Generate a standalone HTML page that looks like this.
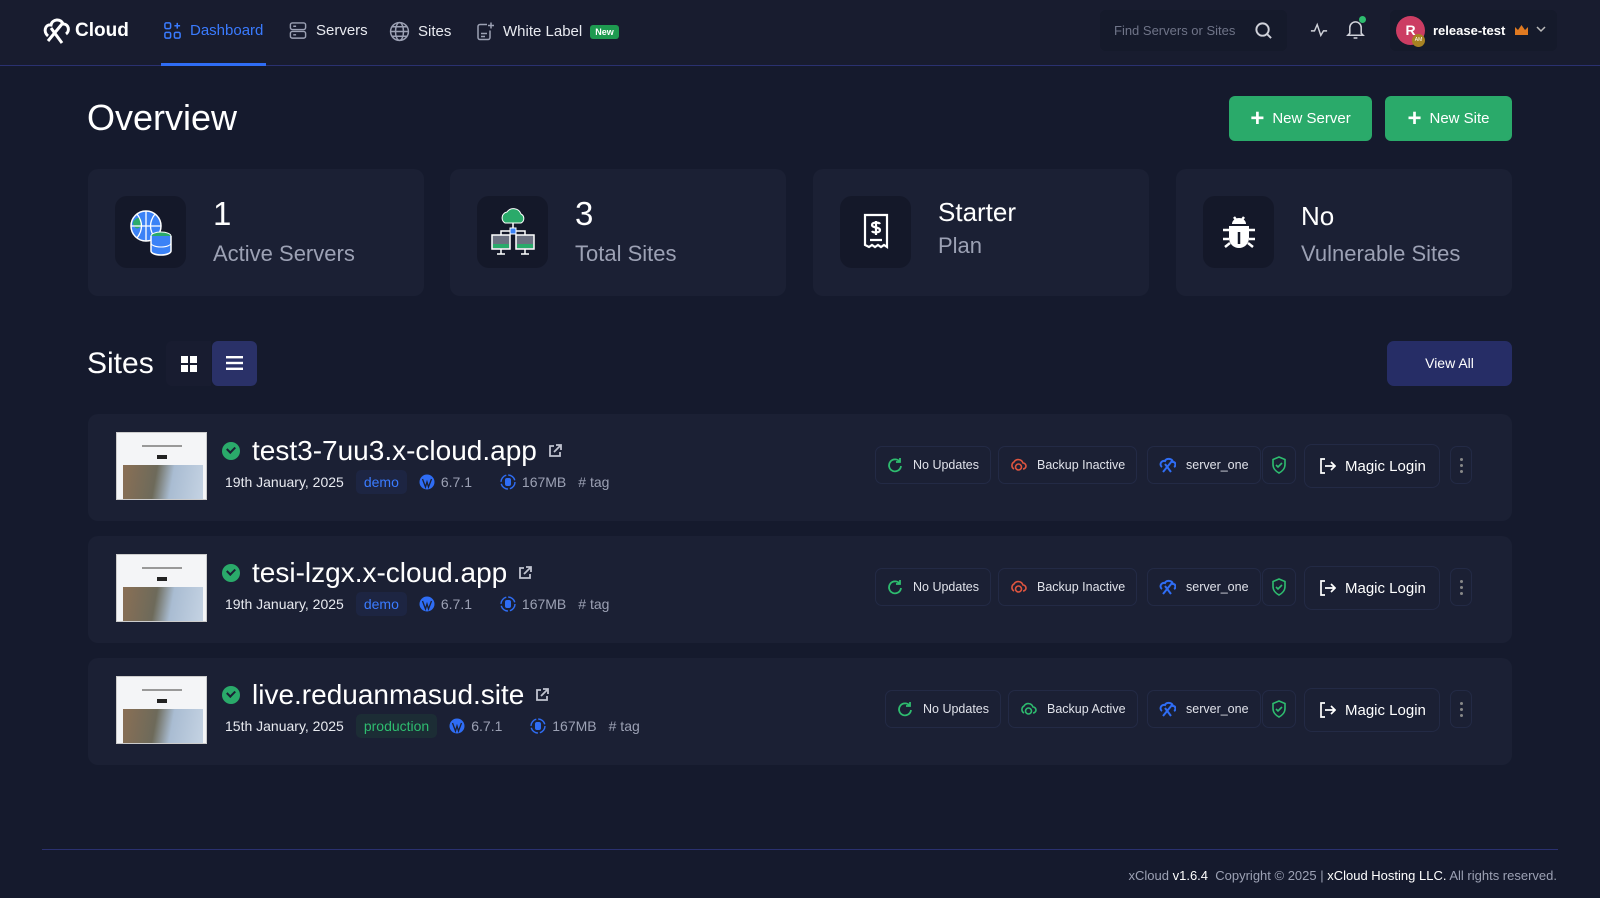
<!DOCTYPE html>
<html><head><meta charset="utf-8"><style>
*{box-sizing:border-box;margin:0;padding:0}
body{width:1600px;height:898px;background:#151a2d;font-family:"Liberation Sans",sans-serif;color:#e8eaf0;position:relative;overflow:hidden}
.abs{position:absolute}
header{position:absolute;left:0;top:0;width:1600px;height:66px;background:#181c2f;border-bottom:1px solid #2a3170}
.nav{position:absolute;top:21px;font-size:15px;display:flex;align-items:center;gap:8px;color:#e8eaf0}
.card{position:absolute;top:169px;width:336px;height:127px;background:#1b2034;border-radius:10px}
.card .ib{position:absolute;left:27px;top:27px;width:71px;height:72px;background:#141829;border-radius:12px;display:flex;align-items:center;justify-content:center}
.card .t1{position:absolute;left:125px;top:26px;font-size:33px;color:#fff}
.card .t2{position:absolute;left:125px;top:72px;font-size:22px;color:#9ca1b4}
.btn{position:absolute;top:96px;height:45px;background:#2aaa6a;border-radius:6px;color:#fff;font-size:15px;display:flex;align-items:center;justify-content:center;gap:8px}
.row{position:absolute;left:88px;width:1424px;height:107px;background:#1b2034;border-radius:10px}
.thumb{position:absolute;left:28px;top:18px;width:91px;height:68px;background:#f4f5f7;border:1px solid #ccc;overflow:hidden}
.thumb .img{position:absolute;left:6px;top:32px;width:80px;height:36px;background:linear-gradient(100deg,#8a6f55 0,#6d6a5a 40%,#a9bcd2 60%,#c5d3e3 100%)}
.thumb .l{position:absolute;left:25px;top:12px;width:40px;height:2px;background:#999}
.thumb .b{position:absolute;left:40px;top:22px;width:10px;height:4px;background:#222}
.title{position:absolute;left:134px;top:21px;font-size:28px;color:#fff;display:flex;align-items:center;gap:10px;white-space:nowrap}
.chk{width:18px;height:18px;border-radius:50%;background:#2aaa6a;display:inline-block;position:relative;margin-right:2px}
.chk:after{content:"";position:absolute;left:5px;top:4px;width:6px;height:4px;border-left:2px solid #1b2034;border-bottom:2px solid #1b2034;transform:rotate(-45deg)}
.sub{position:absolute;left:137px;top:56px;font-size:14px;color:#e8eaf0;display:flex;align-items:center;gap:12px;white-space:nowrap}
.tag{padding:4px 8px;border-radius:5px;background:#1d2542;color:#3a7bff}
.tag.p{background:#1c2d35;color:#2ebc6f}
.gr{color:#9ca1b4;display:flex;align-items:center;gap:6px}
.chip{position:absolute;top:32px;height:38px;border:1px solid #232a45;border-radius:7px;display:flex;align-items:center;gap:10px;padding:0 11px;font-size:12.5px;color:#e0e2ea;white-space:nowrap}
.ml{position:absolute;top:32px;height:44px;border:1px solid #232a45;border-radius:8px;display:flex;align-items:center;gap:9px;padding:0 13px;font-size:15px;color:#fff}
</style></head><body>
<header>
<div class="abs" style="left:42px;top:16px;display:flex;align-items:center;gap:3px">
<svg width="30" height="30" viewBox="0 0 30 30" fill="none" stroke="#fff" stroke-width="3"><path d="M6 20 C1 16 3 8 9 9 C10 3 19 2 21 8 C27 8 28 15 24 18"/><path d="M6 25 L20 8 M9 12 L20 27"/></svg>
<span style="font-weight:bold;font-size:19px;color:#fff">Cloud</span></div>
<div class="nav" style="left:163px;color:#3a7bff"><svg width="19" height="19" viewBox="0 0 20 20" fill="none" stroke="#3a7bff" stroke-width="1.6"><rect x="2" y="2" width="6" height="6" rx="1.5"/><rect x="2" y="12" width="6" height="6" rx="1.5"/><rect x="12" y="12" width="6" height="6" rx="1.5"/><path d="M15 2v6M12 5h6"/></svg>Dashboard</div>
<div class="abs" style="left:161px;top:63px;width:105px;height:3px;background:#2f6df5"></div>
<div class="nav" style="left:288px"><svg width="20" height="19" viewBox="0 0 20 20" fill="none" stroke="#9ca1b4" stroke-width="1.5"><rect x="2" y="2" width="16" height="7" rx="2"/><rect x="2" y="11" width="16" height="7" rx="2"/><path d="M5 5.5h3M5 14.5h3"/></svg>Servers</div>
<div class="nav" style="left:389px"><svg width="21" height="21" viewBox="0 0 20 20" fill="none" stroke="#9ca1b4" stroke-width="1.4"><circle cx="10" cy="10" r="8.5"/><ellipse cx="10" cy="10" rx="3.8" ry="8.5"/><path d="M1.5 10h17M3 5.5h14M3 14.5h14"/></svg>Sites</div>
<div class="nav" style="left:475px"><svg width="20" height="21" viewBox="0 0 20 20" fill="none" stroke="#9ca1b4" stroke-width="1.5"><path d="M12 3H5a2 2 0 0 0-2 2v11a2 2 0 0 0 2 2h8a2 2 0 0 0 2-2V9"/><path d="M16 1v6M13 4h6M6 12h6M6 15h4"/></svg>White Label <span style="background:#1e9a50;color:#fff;font-size:9px;font-weight:bold;padding:2px 5px;border-radius:3px">New</span></div>
<div class="abs" style="left:1100px;top:10px;width:187px;height:41px;background:#151a2b;border-radius:6px;font-size:13px;color:#6f7488;padding:13px 14px">Find Servers or Sites
<svg class="abs" style="right:14px;top:11px" width="19" height="19" viewBox="0 0 20 20" fill="none" stroke="#d0d2da" stroke-width="2"><circle cx="9" cy="9" r="6.5"/><path d="M14 14l4 4"/></svg></div>
<svg class="abs" style="left:1310px;top:21px" width="18" height="18" viewBox="0 0 20 20" fill="none" stroke="#d0d2da" stroke-width="1.6"><path d="M1 11h4l3-7 4 12 3-5h4"/></svg>
<svg class="abs" style="left:1346px;top:19px" width="19" height="21" viewBox="0 0 20 22" fill="none" stroke="#d0d2da" stroke-width="1.6"><path d="M4 15V9a6 6 0 0 1 12 0v6l2 2H2z M8 20h4"/></svg>
<div class="abs" style="left:1359px;top:16px;width:7px;height:7px;border-radius:50%;background:#2ebc6f"></div>
<div class="abs" style="left:1390px;top:10px;width:167px;height:41px;background:#151a2b;border-radius:6px"></div>
<div class="abs" style="left:1396px;top:16px;width:29px;height:29px;border-radius:50%;background:#cc3d63;color:#fff;font-size:14px;font-weight:bold;text-align:center;line-height:29px">R</div>
<div class="abs" style="left:1412px;top:34px;width:13px;height:13px;border-radius:50%;background:#a78222;font-size:5px;color:#fff;text-align:center;line-height:13px">AM</div>
<div class="abs" style="left:1433px;top:23px;font-size:13px;font-weight:bold;color:#fff">release-test</div>
<svg class="abs" style="left:1514px;top:24px" width="15" height="12" viewBox="0 0 15 12"><path d="M1 3l3 3 3.5-5 3.5 5 3-3v8H1z" fill="#e07a21"/></svg>
<svg class="abs" style="left:1536px;top:26px" width="10" height="7" viewBox="0 0 10 7" fill="none" stroke="#bbb" stroke-width="1.5"><path d="M1 1l4 4 4-4"/></svg>
</header>
<div class="abs" style="left:87px;top:97px;font-size:36px;color:#fff">Overview</div>
<div class="btn" style="left:1229px;width:143px"><b style="font-size:24px;font-weight:bold">+</b>New Server</div>
<div class="btn" style="left:1385px;width:127px"><b style="font-size:24px">+</b>New Site</div>

<div class="card" style="left:88px"><div class="ib"><svg width="48" height="52" viewBox="0 0 48 52"><circle cx="19" cy="20" r="15" fill="#3b82f6" stroke="#fff" stroke-width="1.5"/><path d="M6 16c4-6 10-6 8 2s-8 4-8-2z" fill="#2aaa6a"/><path d="M4 20h30M19 5v30M10 8c6 8 6 16 0 24M28 8c-6 8-6 16 0 24" stroke="#fff" stroke-width="1.3" fill="none"/><ellipse cx="34" cy="30" rx="10" ry="4" fill="#2aaa6a" stroke="#fff"/><path d="M24 30v15c0 2 4 4 10 4s10-2 10-4V30" fill="#3b82f6" stroke="#fff" stroke-width="1.5"/><path d="M24 37c0 2 4 4 10 4s10-2 10-4M24 43" stroke="#fff" fill="none"/></svg></div><div class="t1">1</div><div class="t2">Active Servers</div></div>
<div class="card" style="left:450px"><div class="ib"><svg width="48" height="50" viewBox="0 0 48 50"><path d="M16 16a6 6 0 0 1 2-11 8 8 0 0 1 14 2 5 5 0 0 1 0 9z" fill="#2aaa6a" stroke="#fff"/><path d="M24 16v8M12 28v-4h24v4" stroke="#fff" stroke-width="1.5" fill="none"/><rect x="21" y="21" width="6" height="6" fill="#3b82f6" stroke="#fff"/><rect x="3" y="28" width="18" height="14" fill="#6b7080" stroke="#fff" stroke-width="1.5"/><rect x="27" y="28" width="18" height="14" fill="#6b7080" stroke="#fff" stroke-width="1.5"/><rect x="4" y="37" width="16" height="4" fill="#2aaa6a"/><rect x="28" y="37" width="16" height="4" fill="#2aaa6a"/><path d="M12 42v5M8 47h8M36 42v5M32 47h8" stroke="#fff" stroke-width="1.5"/></svg></div><div class="t1">3</div><div class="t2">Total Sites</div></div>
<div class="card" style="left:813px"><div class="ib"><svg width="28" height="38" viewBox="0 0 28 38" fill="none" stroke="#fff" stroke-width="2.2"><path d="M3 2h22v32l-3-2-3 2-3-2-3 2-3-2-3 2-4-2z"/><path d="M14 8v14M18 11c-1-2-8-2-8 1s8 2 8 5-7 3-8 1M8 27h12"/></svg></div><div class="t1" style="top:28px;font-size:26px">Starter</div><div class="t2" style="top:64px">Plan</div></div>
<div class="card" style="left:1176px"><div class="ib"><svg width="34" height="36" viewBox="0 0 34 36"><path d="M10 10a7 6 0 0 1 14 0z" fill="#fff"/><path d="M7 12h20v12a10 10 0 0 1-20 0z" fill="#fff"/><path d="M17 18v12" stroke="#141829" stroke-width="2.5"/><path d="M12 3l3 4M22 3l-3 4M1 16h6M27 16h6M1 25h6M27 25h6M3 33l5-4M31 33l-5-4" stroke="#fff" stroke-width="2.5"/></svg></div><div class="t1" style="top:32px;font-size:26px">No</div><div class="t2">Vulnerable Sites</div></div>

<div class="abs" style="left:87px;top:347px;font-size:30px;color:#fff">Sites</div>
<div class="abs" style="left:166px;top:341px;width:45px;height:45px;background:#181c30;border-radius:6px 0 0 6px"></div>
<svg class="abs" style="left:181px;top:356px" width="16" height="16" viewBox="0 0 16 16" fill="#fff"><rect x="0" y="0" width="7" height="7"/><rect x="9" y="0" width="7" height="7"/><rect x="0" y="9" width="7" height="7"/><rect x="9" y="9" width="7" height="7"/></svg>
<div class="abs" style="left:212px;top:341px;width:45px;height:45px;background:#2a3168;border-radius:6px"></div>
<svg class="abs" style="left:226px;top:356px" width="17" height="14" viewBox="0 0 17 14" fill="#fff"><rect y="0" width="17" height="2.4"/><rect y="5.8" width="17" height="2.4"/><rect y="11.6" width="17" height="2.4"/></svg>
<div class="abs" style="left:1387px;top:341px;width:125px;height:45px;background:#262d66;border-radius:7px;color:#fff;font-size:14px;text-align:center;line-height:45px">View All</div>

<div class="row" style="top:414px">
<div class="thumb"><div class="l"></div><div class="b"></div><div class="img"></div></div>
<div class="title"><span class="chk"></span>test3-7uu3.x-cloud.app <svg width="16" height="16" viewBox="0 0 16 16" fill="none" stroke="#c0c3cf" stroke-width="1.8"><path d="M7 3H3v10h10V9M9 2h5v5M14 2L7 9"/></svg></div>
<div class="sub">19th January, 2025 <span class="tag">demo</span> <span class="gr"><svg width="16" height="16" viewBox="0 0 16 16"><circle cx="8" cy="8" r="7.5" fill="#2f6df5"/><path d="M3.5 5l3 8 1.5-5 1.5 5 3-8" stroke="#1b2034" stroke-width="1.3" fill="none"/></svg>6.7.1</span> &nbsp;<span class="gr"><svg width="16" height="16" viewBox="0 0 16 16"><circle cx="8" cy="8" r="7" fill="none" stroke="#2f6df5" stroke-width="1.4" stroke-dasharray="9 2"/><rect x="5" y="4" width="6" height="8" rx="2" fill="#2f6df5"/></svg>167MB</span><span class="gr"># tag</span></div>
<div class="chip" style="left:787px"><svg width="16" height="16" viewBox="0 0 16 16" fill="none" stroke="#2ebc6f" stroke-width="1.8"><path d="M13 5A6 6 0 1 0 14 9M13 1v4H9"/></svg>No Updates</div>
<div class="chip" style="left:910px"><svg width="17" height="16" viewBox="0 0 17 16" fill="none" stroke="#e0553f" stroke-width="1.6"><path d="M4 12a4 4 0 0 1 0-7 5 5 0 0 1 9 1 3 3 0 0 1 0 6"/><circle cx="8.5" cy="10" r="3"/></svg>Backup Inactive</div>
<div class="chip" style="left:1059px"><svg width="17" height="16" viewBox="0 0 17 16" fill="none" stroke="#2f6df5" stroke-width="2"><path d="M3 10c-3-2-1-7 3-6 1-3 7-3 8 1 3 0 3 4 1 5M4 15L13 4M6 7l6 8"/></svg>server_one</div>
<div class="chip" style="left:1174px;padding:0 8px"><svg width="16" height="18" viewBox="0 0 16 18" fill="none" stroke="#2ebc6f" stroke-width="1.6"><path d="M8 1l6 2.5v5c0 4-3 7-6 8.5-3-1.5-6-4.5-6-8.5v-5z M5 9l2 2 4-4"/></svg></div>
<div class="ml" style="left:1216px;top:30px"><svg width="18" height="18" viewBox="0 0 18 18" fill="none" stroke="#fff" stroke-width="1.7"><path d="M7 2H3v14h4M7 9h10M13 5l4 4-4 4"/></svg>Magic Login</div>
<div class="chip" style="left:1362px;width:22px;padding:0;justify-content:center;flex-direction:column;gap:3px"><i style="width:3px;height:3px;background:#888;border-radius:50%"></i><i style="width:3px;height:3px;background:#888;border-radius:50%"></i><i style="width:3px;height:3px;background:#888;border-radius:50%"></i></div>
</div>

<div class="row" style="top:536px">
<div class="thumb"><div class="l"></div><div class="b"></div><div class="img"></div></div>
<div class="title"><span class="chk"></span>tesi-lzgx.x-cloud.app <svg width="16" height="16" viewBox="0 0 16 16" fill="none" stroke="#c0c3cf" stroke-width="1.8"><path d="M7 3H3v10h10V9M9 2h5v5M14 2L7 9"/></svg></div>
<div class="sub">19th January, 2025 <span class="tag">demo</span> <span class="gr"><svg width="16" height="16" viewBox="0 0 16 16"><circle cx="8" cy="8" r="7.5" fill="#2f6df5"/><path d="M3.5 5l3 8 1.5-5 1.5 5 3-8" stroke="#1b2034" stroke-width="1.3" fill="none"/></svg>6.7.1</span> &nbsp;<span class="gr"><svg width="16" height="16" viewBox="0 0 16 16"><circle cx="8" cy="8" r="7" fill="none" stroke="#2f6df5" stroke-width="1.4" stroke-dasharray="9 2"/><rect x="5" y="4" width="6" height="8" rx="2" fill="#2f6df5"/></svg>167MB</span><span class="gr"># tag</span></div>
<div class="chip" style="left:787px"><svg width="16" height="16" viewBox="0 0 16 16" fill="none" stroke="#2ebc6f" stroke-width="1.8"><path d="M13 5A6 6 0 1 0 14 9M13 1v4H9"/></svg>No Updates</div>
<div class="chip" style="left:910px"><svg width="17" height="16" viewBox="0 0 17 16" fill="none" stroke="#e0553f" stroke-width="1.6"><path d="M4 12a4 4 0 0 1 0-7 5 5 0 0 1 9 1 3 3 0 0 1 0 6"/><circle cx="8.5" cy="10" r="3"/></svg>Backup Inactive</div>
<div class="chip" style="left:1059px"><svg width="17" height="16" viewBox="0 0 17 16" fill="none" stroke="#2f6df5" stroke-width="2"><path d="M3 10c-3-2-1-7 3-6 1-3 7-3 8 1 3 0 3 4 1 5M4 15L13 4M6 7l6 8"/></svg>server_one</div>
<div class="chip" style="left:1174px;padding:0 8px"><svg width="16" height="18" viewBox="0 0 16 18" fill="none" stroke="#2ebc6f" stroke-width="1.6"><path d="M8 1l6 2.5v5c0 4-3 7-6 8.5-3-1.5-6-4.5-6-8.5v-5z M5 9l2 2 4-4"/></svg></div>
<div class="ml" style="left:1216px;top:30px"><svg width="18" height="18" viewBox="0 0 18 18" fill="none" stroke="#fff" stroke-width="1.7"><path d="M7 2H3v14h4M7 9h10M13 5l4 4-4 4"/></svg>Magic Login</div>
<div class="chip" style="left:1362px;width:22px;padding:0;justify-content:center;flex-direction:column;gap:3px"><i style="width:3px;height:3px;background:#888;border-radius:50%"></i><i style="width:3px;height:3px;background:#888;border-radius:50%"></i><i style="width:3px;height:3px;background:#888;border-radius:50%"></i></div>
</div>

<div class="row" style="top:658px">
<div class="thumb"><div class="l"></div><div class="b"></div><div class="img"></div></div>
<div class="title"><span class="chk"></span>live.reduanmasud.site <svg width="16" height="16" viewBox="0 0 16 16" fill="none" stroke="#c0c3cf" stroke-width="1.8"><path d="M7 3H3v10h10V9M9 2h5v5M14 2L7 9"/></svg></div>
<div class="sub">15th January, 2025 <span class="tag p">production</span> <span class="gr"><svg width="16" height="16" viewBox="0 0 16 16"><circle cx="8" cy="8" r="7.5" fill="#2f6df5"/><path d="M3.5 5l3 8 1.5-5 1.5 5 3-8" stroke="#1b2034" stroke-width="1.3" fill="none"/></svg>6.7.1</span> &nbsp;<span class="gr"><svg width="16" height="16" viewBox="0 0 16 16"><circle cx="8" cy="8" r="7" fill="none" stroke="#2f6df5" stroke-width="1.4" stroke-dasharray="9 2"/><rect x="5" y="4" width="6" height="8" rx="2" fill="#2f6df5"/></svg>167MB</span><span class="gr"># tag</span></div>
<div class="chip" style="left:797px"><svg width="16" height="16" viewBox="0 0 16 16" fill="none" stroke="#2ebc6f" stroke-width="1.8"><path d="M13 5A6 6 0 1 0 14 9M13 1v4H9"/></svg>No Updates</div>
<div class="chip" style="left:920px"><svg width="17" height="16" viewBox="0 0 17 16" fill="none" stroke="#2ebc6f" stroke-width="1.6"><path d="M4 12a4 4 0 0 1 0-7 5 5 0 0 1 9 1 3 3 0 0 1 0 6"/><circle cx="8.5" cy="10" r="3"/></svg>Backup Active</div>
<div class="chip" style="left:1059px"><svg width="17" height="16" viewBox="0 0 17 16" fill="none" stroke="#2f6df5" stroke-width="2"><path d="M3 10c-3-2-1-7 3-6 1-3 7-3 8 1 3 0 3 4 1 5M4 15L13 4M6 7l6 8"/></svg>server_one</div>
<div class="chip" style="left:1174px;padding:0 8px"><svg width="16" height="18" viewBox="0 0 16 18" fill="none" stroke="#2ebc6f" stroke-width="1.6"><path d="M8 1l6 2.5v5c0 4-3 7-6 8.5-3-1.5-6-4.5-6-8.5v-5z M5 9l2 2 4-4"/></svg></div>
<div class="ml" style="left:1216px;top:30px"><svg width="18" height="18" viewBox="0 0 18 18" fill="none" stroke="#fff" stroke-width="1.7"><path d="M7 2H3v14h4M7 9h10M13 5l4 4-4 4"/></svg>Magic Login</div>
<div class="chip" style="left:1362px;width:22px;padding:0;justify-content:center;flex-direction:column;gap:3px"><i style="width:3px;height:3px;background:#888;border-radius:50%"></i><i style="width:3px;height:3px;background:#888;border-radius:50%"></i><i style="width:3px;height:3px;background:#888;border-radius:50%"></i></div>
</div>

<div class="abs" style="left:42px;top:849px;width:1516px;height:1px;background:#2a3170"></div>
<div class="abs" style="right:43px;top:868px;font-size:13px;color:#9ca1b4">xCloud <b style="color:#fff;font-weight:normal">v1.6.4</b>&nbsp; Copyright © 2025 | <span style="color:#fff">xCloud Hosting LLC.</span> All rights reserved.</div>
</body></html>
